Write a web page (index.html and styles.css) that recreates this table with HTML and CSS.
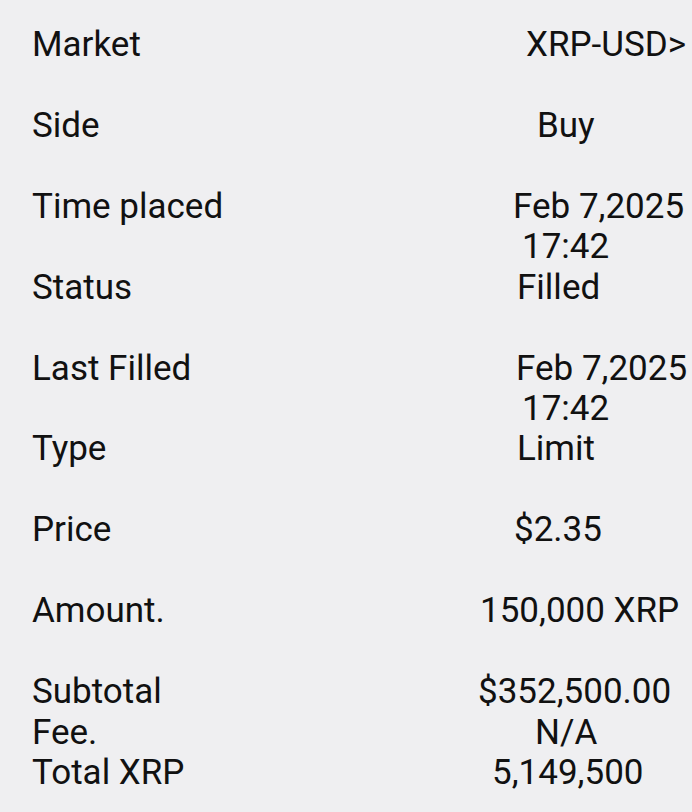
FILE: index.html
```html
<!DOCTYPE html>
<html lang="en">
<head>
<meta charset="utf-8">
<title>Order details</title>
<link rel="stylesheet" href="styles.css">
</head>
<body>
<main class="details">
  <div class="row gap"><span class="label">Market</span><span class="value v-market">XRP-USD&gt;</span></div>
  <div class="row gap"><span class="label">Side</span><span class="value v-side">Buy</span></div>
  <div class="row"><span class="label">Time placed</span><span class="value v-date">Feb 7,2025<br><span class="time">17:42</span></span></div>
  <div class="row gap"><span class="label">Status</span><span class="value v-status">Filled</span></div>
  <div class="row"><span class="label">Last Filled</span><span class="value v-date2">Feb 7,2025<br><span class="time2">17:42</span></span></div>
  <div class="row gap"><span class="label">Type</span><span class="value v-status">Limit</span></div>
  <div class="row gap"><span class="label">Price</span><span class="value v-price">$2.35</span></div>
  <div class="row gap"><span class="label">Amount.</span><span class="value v-amount">150,000 XRP</span></div>
  <div class="row"><span class="label">Subtotal</span><span class="value v-subtotal">$352,500.00</span></div>
  <div class="row"><span class="label">Fee.</span><span class="value v-fee">N/A</span></div>
  <div class="row"><span class="label">Total XRP</span><span class="value v-total">5,149,500</span></div>
</main>
</body>
</html>
```

FILE: styles.css
```css
html, body {
  margin: 0;
  padding: 0;
  background: #efeff1;
}

body {
  font-family: Roboto, "Liberation Sans", sans-serif;
  font-size: 35px;
  line-height: 40.45px;
  color: #111111;
}

.details {
  display: flex;
  flex-direction: column;
  padding: 25px 0 0 32px;
}

.row {
  display: grid;
  grid-template-columns: 446px 1fr;
}

.row.gap {
  padding-bottom: 40.45px;
}

.label,
.value {
  white-space: nowrap;
}

.v-market { padding-left: 48px; }
.v-side { padding-left: 59px; }
.v-date { padding-left: 35px; }
.v-date .time { padding-left: 9px; }
.v-date2 { padding-left: 38px; }
.v-date2 .time2 { padding-left: 6px; }
.v-status { padding-left: 39px; }
.v-price { padding-left: 36px; }
.v-amount { padding-left: 2px; }
.v-subtotal { padding-left: 0; }
.v-fee { padding-left: 57px; }
.v-total { padding-left: 14px; }
```
